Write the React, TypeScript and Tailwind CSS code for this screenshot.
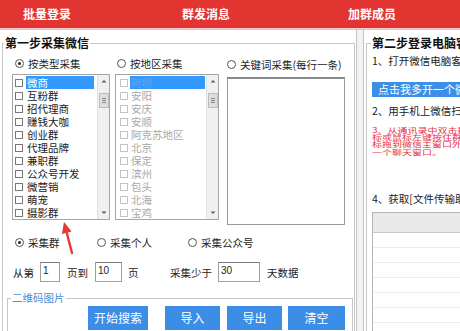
import React from 'react';

const typeItems = ['微商', '互粉群', '招代理商', '赚钱大咖', '创业群', '代理品牌', '兼职群', '公众号开发', '微营销', '萌宠', '摄影群'];
const areaItems = ['阿坝', '安阳', '安庆', '安顺', '阿克苏地区', '北京', '保定', '滨州', '包头', '北海', '宝鸡'];

function Radio({ label, checked = false }: { label: string; checked?: boolean }) {
  return (
    <div className="flex items-center h-[13px]">
      <span className="w-[9px] h-[9px] rounded-full border-[1.5px] border-[#555] bg-white flex items-center justify-center">
        {checked && <span className="w-[3px] h-[3px] rounded-full bg-[#222]" />}
      </span>
      <span className="ml-[4px] text-[10.5px] leading-[13px] text-[#222] whitespace-nowrap">{label}</span>
    </div>
  );
}

function ScrollBar() {
  return (
    <div className="w-[12px] h-full flex flex-col items-center bg-[#f0f0f0] border-l border-[#e2e2e2]">
      <svg className="w-[12px] h-[12px]" viewBox="0 0 12 12">
        <path d="M3.5 7.5 L6 5 L8.5 7.5 Z" fill="#606060" />
      </svg>
      <div className="mt-[6px] w-[10px] h-[15px] bg-[#dedede] border border-[#bdbdbd] flex flex-col items-center justify-center gap-[1px]">
        <span className="w-[4px] h-px bg-[#888]" />
        <span className="w-[4px] h-px bg-[#888]" />
        <span className="w-[4px] h-px bg-[#888]" />
      </div>
      <svg className="mt-auto w-[12px] h-[12px]" viewBox="0 0 12 12">
        <path d="M3.5 4.5 L6 7 L8.5 4.5 Z" fill="#606060" />
      </svg>
    </div>
  );
}

function ListBox({ items, disabled = false }: { items: string[]; disabled?: boolean }) {
  return (
    <div className={`${disabled ? 'w-[104px]' : 'w-[98px]'} h-[146px] border border-[#a5a5a5] bg-white flex overflow-hidden`}>
      <div className="flex-1 pt-[1px]">
        {items.map((item, i) => (
          <div key={item} className="flex items-center h-[13px]">
            <span
              className={`${disabled ? 'ml-[4px] border-[#c4c4c4]' : 'ml-[2px] border-[#777]'} w-[8px] h-[8px] border bg-white shrink-0`}
            />
            <span
              className={`${disabled ? 'ml-[2px]' : 'ml-[3px]'} pl-[1px] text-[10.5px] leading-[13px] whitespace-nowrap ${
                i === 0
                  ? `bg-[#3399ff] ${disabled ? 'w-[75px] text-[#5aa6f6]' : 'w-[68px] text-white'}`
                  : disabled
                  ? 'text-[#a8a8a8]'
                  : 'text-[#1a1a1a]'
              }`}
            >
              {item}
            </span>
          </div>
        ))}
      </div>
      <ScrollBar />
    </div>
  );
}

function Field({ value, w }: { value: string; w: string }) {
  return (
    <div className={`${w} h-[20px] border border-[#a0a0a0] border-t-[#7c7c7c] bg-white pl-[2px] text-[10px] leading-[16px] font-['Liberation_Sans',sans-serif] text-[#222]`}>
      {value}
    </div>
  );
}

export default function App() {
  return (
    <div className="relative w-[460px] h-[331px] overflow-hidden bg-white font-['Noto_Sans_CJK_SC','Noto_Sans',sans-serif]">
      {/* top tabs */}
      <div className="h-[28px] bg-[#e23531] flex items-center pb-[1px] text-white font-bold text-[12px] leading-[14px]">
        <span className="ml-[23px] w-[159px]">批量登录</span>
        <span className="w-[166px]">群发消息</span>
        <span>加群成员</span>
      </div>
      <div className="h-px bg-[#f2cccc]" />
      <div className="h-px bg-[#cfcfcf]" />

      <div className="flex h-[301px]">
        {/* step one */}
        <div className="w-[356px]">
          <fieldset className="mt-[6px] ml-[2px] w-[353px] min-w-0 h-[320px] border border-[#c6c6c6]">
            <legend className="ml-[1px] px-[1px] text-[12px] leading-[14px] font-bold text-[#111]">第一步采集微信</legend>

            <div className="pl-[9px] pt-[7px]">
              <div className="flex items-start">
                <div className="flex flex-col">
                  <div className="ml-[3px]">
                    <Radio label="按类型采集" checked />
                  </div>
                  <div className="mt-[4px]">
                    <ListBox items={typeItems} />
                  </div>
                </div>
                <div className="ml-[5px] flex flex-col">
                  <div className="ml-[2px]">
                    <Radio label="按地区采集" />
                  </div>
                  <div className="mt-[4px]">
                    <ListBox items={areaItems} disabled />
                  </div>
                </div>
                <div className="ml-[8px] flex flex-col">
                  <div className="mt-[1px]">
                    <Radio label="关键词采集(每行一条)" />
                  </div>
                  <div className="mt-[6px] w-[118px] h-[148px] bg-white border border-[#9a9a9a] border-t-2 border-t-[#8a8a8a]" />
                </div>
              </div>

              <div className="mt-[11px] flex">
                <div className="w-[82px] pl-[3px]">
                  <Radio label="采集群" checked />
                </div>
                <div className="w-[91px] pl-[3px]">
                  <Radio label="采集个人" />
                </div>
                <div className="pl-[3px]">
                  <Radio label="采集公众号" />
                </div>
              </div>

              <div className="mt-[13px] flex items-center text-[10.5px] leading-[13px] text-[#222] whitespace-nowrap">
                <span className="ml-[1px] w-[27px]">从第</span>
                <Field value="1" w="w-[20px]" />
                <span className="ml-[7px] w-[28px]">页到</span>
                <Field value="10" w="w-[27px]" />
                <span className="ml-[6px] w-[42px]">页</span>
                <span className="w-[48px]">采集少于</span>
                <Field value="30" w="w-[42px]" />
                <span className="ml-[7px]">天数据</span>
              </div>
            </div>

            <fieldset className="mt-[10px] ml-[4px] w-[346px] min-w-0 h-[60px] border border-[#c6c6c6]">
              <legend className="ml-[3px] px-[1px] text-[10.5px] leading-[12px] text-[#4a8fd8]">二维码图片</legend>
              <div className="mt-[2px] ml-[80px] flex text-white text-[12px] leading-[24px]">
                <button className="w-[60px] h-[24px] bg-[#3c8de6] text-center">开始搜索</button>
                <button className="ml-[17px] w-[55px] h-[24px] bg-[#3c8de6] text-center">导入</button>
                <button className="ml-[7px] w-[55px] h-[24px] bg-[#3c8de6] text-center">导出</button>
                <button className="ml-[6px] w-[57px] h-[24px] bg-[#3c8de6] text-center">清空</button>
              </div>
            </fieldset>
          </fieldset>
        </div>

        {/* splitter */}
        <div className="w-[8px] h-full border-x border-[#c4c4c4] bg-[#f2f2f2]" />

        {/* step two */}
        <div className="flex-1 min-w-0">
          <fieldset className="mt-[6px] ml-[2px] w-[200px] min-w-0 h-[320px] border border-[#c6c6c6] overflow-hidden">
            <legend className="ml-[4px] px-[1px] text-[12px] leading-[14px] font-bold text-[#111] whitespace-nowrap">第二步登录电脑客户端</legend>
            <div className="pl-[5px] whitespace-nowrap text-[10.5px] leading-[13px] text-[#222]">
              <div className="mt-[4px]">1、打开微信电脑客户端，扫码登录</div>
              <div className="mt-[15px] h-[15px] bg-[#3d8ee6] pl-[6px] text-white text-[11px] leading-[15px]">点击我多开一个微信客户端</div>
              <div className="mt-[7px]">2、用手机上微信扫一扫登录</div>
              {/* the red hint is squeezed vertically in the original */}
              <div className="mt-[9px] h-[40px] origin-top scale-y-[0.74] text-[#e5333f] text-[10px] leading-[10px]">
                <div>3、从通讯录中双击群聊图</div>
                <div>标或鼠标左键按住群聊图</div>
                <div>标拖到微信主窗口外，打开</div>
                <div>一个聊天窗口。</div>
              </div>
              <div className="mt-[26px]">4、获取[文件传输助手]</div>
              <div className="mt-[7px] border border-[#b5b5b5] bg-white">
                <div className="h-[20px] bg-[#e9e9e9] border-b border-[#c8c8c8]" />
                {[0, 1, 2, 3, 4, 5, 6].map((r) => (
                  <div key={r} className="h-[15px] border-b border-[#ececec]" />
                ))}
              </div>
            </div>
          </fieldset>
        </div>
      </div>

      {/* red pointer arrow */}
      <svg className="absolute left-[58px] top-[218px] w-[20px] h-[38px]" viewBox="0 0 20 38">
        <path d="M6 4 L13.6 13.4 L3.9 16 Z" fill="#e53935" />
        <path d="M8.75 14.7 L14 35" stroke="#e53935" strokeWidth="2.4" strokeLinecap="round" />
      </svg>
    </div>
  );
}
